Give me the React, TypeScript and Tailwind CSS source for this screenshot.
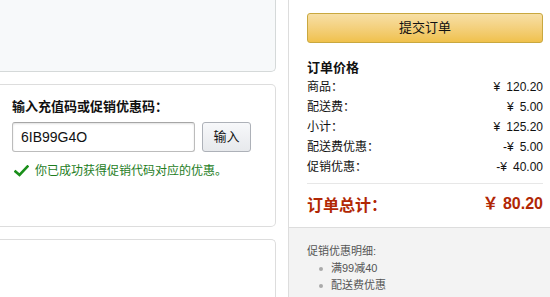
import React from "react";

const cjk = { fontFamily: '"Liberation Sans", "Noto Sans CJK SC", sans-serif' };

function Row({ label, sign, value }: { label: string; sign?: string; value: string }) {
  return (
    <div className="flex justify-between h-[20px] items-center text-[12px] text-[#111]">
      <span>{label}</span>
      <span>
        {sign}
        <span className="mr-[6px]">¥</span>
        {value}
      </span>
    </div>
  );
}

export default function App() {
  return (
    <div className="w-[550px] h-[297px] overflow-hidden bg-white flex" style={cjk}>
      <div className="w-[276px] flex flex-col gap-[12px] shrink-0">
        <div className="h-[72px] bg-[#f7f9fa] border-b border-r border-[#d5d9d9] rounded-br-[5px]" />
        <div className="h-[143px] bg-white border border-l-0 border-[#dddddd] rounded-r-[5px] pl-[12px] pt-[13px]">
          <div className="text-[13px] font-bold leading-[18px] text-[#111]">输入充值码或促销优惠码：</div>
          <div className="flex gap-[7px] mt-[6px]">
            <div className="w-[183px] h-[30px] border border-[#bcbcbc] border-t-[#a6a6a6] rounded-[3px] shadow-[inset_0_1px_2px_rgba(0,0,0,0.12)] flex items-center pl-[8px] text-[14px] text-[#111]">
              6IB99G4O
            </div>
            <div className="w-[49px] h-[30px] border border-[#adb1b8] rounded-[3px] bg-gradient-to-b from-[#f7f8fa] to-[#e7e9ec] flex items-center justify-center text-[13px] text-[#111]">
              输入
            </div>
          </div>
          <div className="flex items-center mt-[10px] h-[18px]">
            <svg width="15" height="12" viewBox="0 0 15 12" className="ml-[2px]">
              <path d="M1.5 6.5 L5.5 10 L13.5 1.5" stroke="#1a8f1a" strokeWidth="2.6" fill="none" strokeLinecap="square" />
            </svg>
            <span className="ml-[6px] text-[12px] text-[#1e7d1e]">你已成功获得促销代码对应的优惠。</span>
          </div>
        </div>
        <div className="flex-1 bg-white border border-l-0 border-b-0 border-[#dddddd] rounded-tr-[5px]" />
      </div>
      <div className="ml-[12px] flex-1 border-l border-[#dddddd] flex flex-col">
        <div className="pl-[18px] pr-[7px] pt-[13px]">
          <div className="h-[30px] rounded-[3px] border border-[#c9a83f] bg-gradient-to-b from-[#f7dfa5] to-[#f0c14b] flex items-center justify-center text-[13px] text-[#111]">
            提交订单
          </div>
          <div className="mt-[16px] text-[13px] font-bold leading-[18px] text-[#111]">订单价格</div>
          <Row label="商品：" value="120.20" />
          <Row label="配送费：" value="5.00" />
          <Row label="小计：" value="125.20" />
          <Row label="配送费优惠：" sign="-" value="5.00" />
          <Row label="促销优惠：" sign="-" value="40.00" />
          <div className="mt-[6px] border-t border-[#e7e7e7]" />
          <div className="mt-[8px] h-[24px] flex justify-between items-center text-[16px] font-bold text-[#b12704]">
            <span style={{ fontFamily: '"Noto Sans CJK SC", serif' }}>订单总计：</span>
            <span>
              <span style={{ fontFamily: '"Liberation Serif", "Noto Sans CJK SC", serif' }}>￥</span> 80.20
            </span>
          </div>
        </div>
        <div className="mt-[11px] flex-1 bg-[#f3f3f3] border-t border-[#dddddd] pl-[18px] pt-[15px] text-[11px] text-[#555]">
          <div className="leading-[16px]">促销优惠明细:</div>
          <ul className="mt-[1px]">
            <li className="flex items-center h-[17px]">
              <span className="w-[4px] h-[4px] rounded-full bg-[#aaa] ml-[12px] mr-[8px]" />
              满99减40
            </li>
            <li className="flex items-center h-[17px]">
              <span className="w-[4px] h-[4px] rounded-full bg-[#aaa] ml-[12px] mr-[8px]" />
              配送费优惠
            </li>
          </ul>
        </div>
      </div>
    </div>
  );
}
